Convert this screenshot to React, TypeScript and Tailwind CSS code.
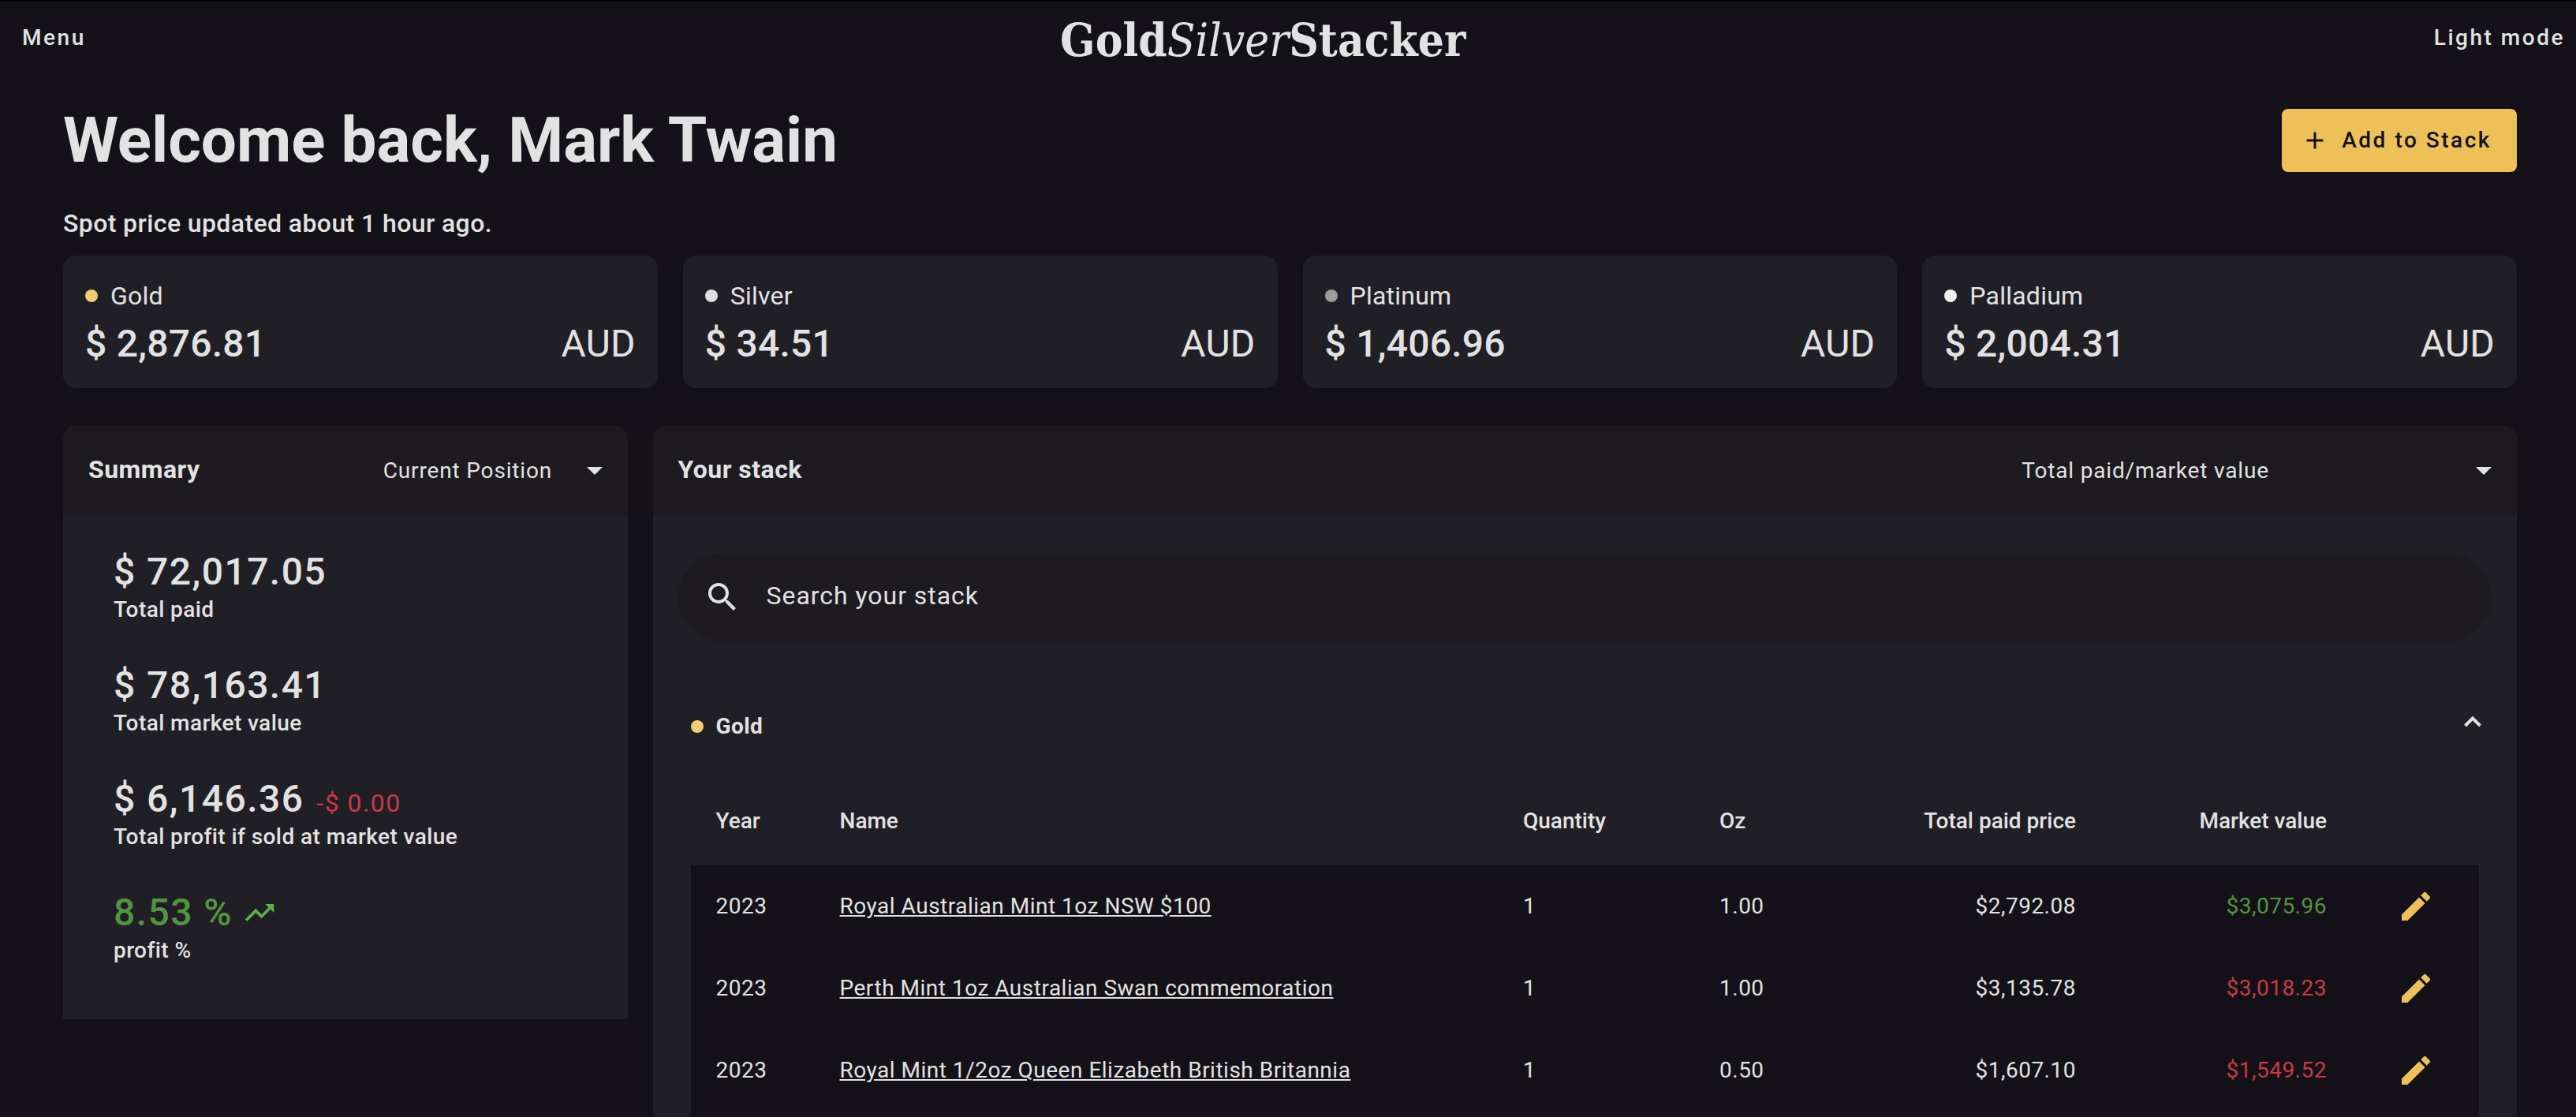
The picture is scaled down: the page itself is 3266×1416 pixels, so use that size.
import { useState } from 'react';
import {
  MdAdd,
  MdArrowDropDown,
  MdEdit,
  MdSearch,
  MdTrendingUp,
} from 'react-icons/md';

type Metal = {
  name: string;
  price: string;
  dot: string;
};

type StackItem = {
  year: number;
  name: string;
  quantity: number;
  oz: string;
  paid: string;
  value: string;
  profit: boolean;
};

const metals: Metal[] = [
  { name: 'Gold', price: '2,876.81', dot: 'bg-[#f0cd74]' },
  { name: 'Silver', price: '34.51', dot: 'bg-[#dedede]' },
  { name: 'Platinum', price: '1,406.96', dot: 'bg-[#9c9c9c]' },
  { name: 'Palladium', price: '2,004.31', dot: 'bg-[#f0f0f0]' },
];

const goldItems: StackItem[] = [
  {
    year: 2023,
    name: 'Royal Australian Mint 1oz NSW $100',
    quantity: 1,
    oz: '1.00',
    paid: '$2,792.08',
    value: '$3,075.96',
    profit: true,
  },
  {
    year: 2023,
    name: 'Perth Mint 1oz Australian Swan commemoration',
    quantity: 1,
    oz: '1.00',
    paid: '$3,135.78',
    value: '$3,018.23',
    profit: false,
  },
  {
    year: 2023,
    name: 'Royal Mint 1/2oz Queen Elizabeth British Britannia',
    quantity: 1,
    oz: '0.50',
    paid: '$1,607.10',
    value: '$1,549.52',
    profit: false,
  },
];

function Header() {
  return (
    <header className="flex h-[94px] items-center justify-between border-t-2 border-black">
      <button className="px-7 text-[28px] font-medium tracking-[0.09em]">
        Menu
      </button>
      <a
        href="#"
        className="pt-1.5 font-['DejaVu_Serif_Condensed','DejaVu_Serif',serif] text-[58px] leading-none font-bold"
      >
        Gold<span className="font-normal italic">Silver</span>Stacker
      </a>
      <button className="pr-3.5 pl-5 text-[28px] font-medium tracking-[0.09em]">
        Light mode
      </button>
    </header>
  );
}

function MetalCard({ metal }: { metal: Metal }) {
  return (
    <div className="flex flex-col gap-[10px] rounded-2xl bg-[#211f26] p-7 tracking-[0.015em]">
      <div className="flex items-center gap-4 text-[32px] leading-[46px]">
        <span className={`h-4 w-4 rounded-full ${metal.dot}`} />
        {metal.name}
      </div>
      <div className="flex justify-between text-[48px] leading-[56px]">
        <span className="font-medium">$ {metal.price}</span>
        <span>AUD</span>
      </div>
    </div>
  );
}

function PanelSelect({
  label,
  options,
  className,
}: {
  label: string;
  options: string[];
  className: string;
}) {
  return (
    <div className={`relative h-full ${className}`}>
      <select
        aria-label={label}
        className="h-full w-full appearance-none bg-transparent pr-16 pl-8 text-[28px] tracking-[0.03em]"
      >
        {options.map((option) => (
          <option key={option}>{option}</option>
        ))}
      </select>
      <MdArrowDropDown className="pointer-events-none absolute top-8 right-[18px] h-12 w-12" />
    </div>
  );
}

function Summary() {
  return (
    <section className="w-[23%] shrink-0 self-start rounded-t-2xl bg-[#211f26]">
      <div className="flex h-[113px] items-center justify-between rounded-t-2xl bg-[#1d1b20] pl-8">
        <h2 className="pb-1 text-[32px] font-bold tracking-[0.015em]">
          Summary
        </h2>
        <PanelSelect
          label="Summary view"
          options={['Current Position']}
          className="w-1/2"
        />
      </div>
      <dl className="flex flex-col gap-12 px-16 pt-11 pb-[67px]">
        <div className="flex flex-col-reverse">
          <dt className="text-[28px] leading-10 font-medium tracking-[0.015em]">
            Total paid
          </dt>
          <dd className="text-[48px] leading-[56px] font-medium tracking-[0.03em]">
            $ 72,017.05
          </dd>
        </div>
        <div className="flex flex-col-reverse">
          <dt className="text-[28px] leading-10 font-medium tracking-[0.015em]">
            Total market value
          </dt>
          <dd className="text-[48px] leading-[56px] font-medium tracking-[0.03em]">
            $ 78,163.41
          </dd>
        </div>
        <div className="flex flex-col-reverse">
          <dt className="text-[28px] leading-10 font-medium tracking-[0.015em]">
            Total profit if sold at market value
          </dt>
          <dd className="flex items-baseline gap-4 text-[48px] leading-[56px] font-medium tracking-[0.03em]">
            $ 6,146.36
            <span className="text-[32px] leading-none font-normal text-[#c83a46]">
              -$ 0.00
            </span>
          </dd>
        </div>
        <div className="flex flex-col-reverse">
          <dt className="text-[28px] leading-10 font-medium tracking-[0.015em]">
            profit %
          </dt>
          <dd className="flex items-center gap-3 text-[48px] leading-[56px] font-medium tracking-[0.03em] text-[#539440]">
            8.53 %
            <MdTrendingUp className="h-11 w-11 text-[#5fae48]" />
          </dd>
        </div>
      </dl>
    </section>
  );
}

function StackTable({ items }: { items: StackItem[] }) {
  return (
    <div className="mx-4 flex-1 bg-[#141218]">
      <table className="w-full table-fixed text-left text-[28px]">
        <thead className="bg-[#211f26]">
          <tr className="h-28">
            <th className="w-[157px] px-8 font-medium">Year</th>
            <th className="px-8 font-medium">Name</th>
            <th className="w-[249px] px-8 font-medium">Quantity</th>
            <th className="w-[219px] px-8 font-medium">Oz</th>
            <th className="w-[297px] px-8 text-right font-medium">
              Total paid price
            </th>
            <th className="w-[318px] px-8 text-right font-medium">
              Market value
            </th>
            <td className="w-[161px]" />
          </tr>
        </thead>
        <tbody className="tracking-[0.018em]">
          {items.map((item) => (
            <tr key={item.name} className="h-[104px]">
              <td className="px-8">{item.year}</td>
              <td className="px-8">
                <a href="#" className="underline">
                  {item.name}
                </a>
              </td>
              <td className="px-8">{item.quantity}</td>
              <td className="px-8">{item.oz}</td>
              <td className="px-8 text-right">{item.paid}</td>
              <td
                className={`px-8 text-right ${item.profit ? 'text-[#539440]' : 'text-[#c83a46]'}`}
              >
                {item.value}
              </td>
              <td>
                <button
                  aria-label={`Edit ${item.name}`}
                  className="mx-auto block text-[#eec158]"
                >
                  <MdEdit className="h-12 w-12" />
                </button>
              </td>
            </tr>
          ))}
        </tbody>
      </table>
    </div>
  );
}

function Stack() {
  const [search, setSearch] = useState('');
  const [open, setOpen] = useState(true);

  const items = goldItems.filter((item) =>
    item.name.toLowerCase().includes(search.toLowerCase()),
  );

  return (
    <section className="flex flex-1 flex-col rounded-t-2xl bg-[#211f26]">
      <div className="flex h-[113px] shrink-0 items-center justify-between rounded-t-2xl bg-[#1d1b20] pl-8">
        <h2 className="pb-1 text-[32px] font-bold tracking-[0.015em]">
          Your stack
        </h2>
        <PanelSelect
          label="Stack columns"
          options={['Total paid/market value']}
          className="w-[28.3%]"
        />
      </div>
      <div className="flex flex-1 flex-col px-8 pt-12">
        <label className="flex h-28 shrink-0 items-center gap-8 rounded-full bg-[#1d1b20] px-8">
          <MdSearch className="h-12 w-12" />
          <input
            type="text"
            value={search}
            onChange={(e) => setSearch(e.target.value)}
            placeholder="Search your stack"
            aria-label="Search your stack"
            className="flex-1 pb-1 text-[32px] tracking-[0.03em] outline-none placeholder:text-[#e2e2e2]"
          />
        </label>
        <button
          onClick={() => setOpen(!open)}
          aria-expanded={open}
          className="mt-11 flex h-32 shrink-0 items-center justify-between pr-3 pl-4"
        >
          <span className="flex items-center gap-4 text-[28px] font-bold tracking-[0.015em]">
            <span className="h-4 w-4 rounded-full bg-[#f0cd74]" />
            Gold
          </span>
          <svg
            className="mb-3 h-4 w-6"
            viewBox="0 0 24 16"
            fill="none"
            stroke="currentColor"
            strokeWidth={4}
          >
            <path d="M2.5 13 12 3.5 21.5 13" />
          </svg>
        </button>
        {open && <StackTable items={items} />}
      </div>
    </section>
  );
}

export default function App() {
  return (
    <div className="flex h-screen flex-col overflow-hidden bg-[#141218] font-[Roboto,sans-serif] text-[#e2e2e2]">
      <Header />
      <main className="flex flex-1 flex-col pt-11 pr-[75px] pl-20">
        <div className="flex items-center justify-between">
          <h1 className="text-[80px] leading-[80px] font-bold">
            Welcome back, Mark Twain
          </h1>
          <button className="flex h-20 items-center gap-4 rounded-lg bg-[#eec158] pr-8 pl-6 text-[28px] font-medium tracking-[0.09em] text-[#141218]">
            <MdAdd className="h-9 w-9" />
            Add to Stack
          </button>
        </div>
        <p className="mt-11 mb-5 text-[32px] leading-[42px] font-medium tracking-[0.0125em]">
          Spot price updated about 1 hour ago.
        </p>
        <div className="grid grid-cols-4 gap-8">
          {metals.map((metal) => (
            <MetalCard key={metal.name} metal={metal} />
          ))}
        </div>
        <div className="mt-12 flex flex-1 gap-8">
          <Summary />
          <Stack />
        </div>
      </main>
    </div>
  );
}
